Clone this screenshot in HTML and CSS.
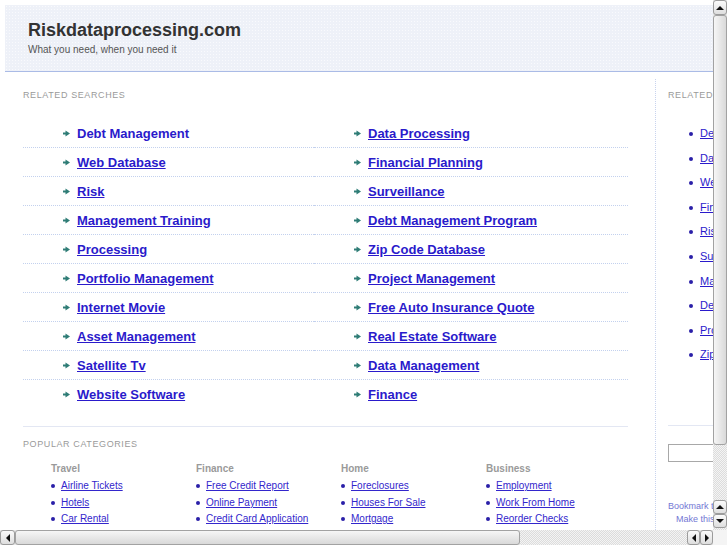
FILE: index.html
```html
<!DOCTYPE html>
<html lang="en">

<head>
    <meta charset="UTF-8">
    <meta name="viewport" content="width=device-width, initial-scale=1.0">
    <title>Riskdataprocessing.com</title>
    <link rel="stylesheet" href="styles.css">
</head>

<body>

    <div class="page">

        <!-- Header -->
        <div class="header">
            <h1>Riskdataprocessing.com</h1>
            <p class="tagline">What you need, when you need it</p>
        </div>

        <div class="content">

            <!-- Main column -->
            <div class="main">
                <h2 class="section-title">Related Searches</h2>
                <ul class="searches">
                    <li><svg class="arrow" width="7" height="7" viewBox="0 0 7 7"><rect x="0" y="2.5" width="3" height="2" /><polygon points="2.5,0.5 7,3.5 2.5,6.5" /></svg><a href="#" class="hover">Debt Management</a></li>
                    <li><svg class="arrow" width="7" height="7" viewBox="0 0 7 7"><rect x="0" y="2.5" width="3" height="2" /><polygon points="2.5,0.5 7,3.5 2.5,6.5" /></svg><a href="#">Data Processing</a></li>
                    <li><svg class="arrow" width="7" height="7" viewBox="0 0 7 7"><rect x="0" y="2.5" width="3" height="2" /><polygon points="2.5,0.5 7,3.5 2.5,6.5" /></svg><a href="#">Web Database</a></li>
                    <li><svg class="arrow" width="7" height="7" viewBox="0 0 7 7"><rect x="0" y="2.5" width="3" height="2" /><polygon points="2.5,0.5 7,3.5 2.5,6.5" /></svg><a href="#">Financial Planning</a></li>
                    <li><svg class="arrow" width="7" height="7" viewBox="0 0 7 7"><rect x="0" y="2.5" width="3" height="2" /><polygon points="2.5,0.5 7,3.5 2.5,6.5" /></svg><a href="#">Risk</a></li>
                    <li><svg class="arrow" width="7" height="7" viewBox="0 0 7 7"><rect x="0" y="2.5" width="3" height="2" /><polygon points="2.5,0.5 7,3.5 2.5,6.5" /></svg><a href="#">Surveillance</a></li>
                    <li><svg class="arrow" width="7" height="7" viewBox="0 0 7 7"><rect x="0" y="2.5" width="3" height="2" /><polygon points="2.5,0.5 7,3.5 2.5,6.5" /></svg><a href="#">Management Training</a></li>
                    <li><svg class="arrow" width="7" height="7" viewBox="0 0 7 7"><rect x="0" y="2.5" width="3" height="2" /><polygon points="2.5,0.5 7,3.5 2.5,6.5" /></svg><a href="#">Debt Management Program</a></li>
                    <li><svg class="arrow" width="7" height="7" viewBox="0 0 7 7"><rect x="0" y="2.5" width="3" height="2" /><polygon points="2.5,0.5 7,3.5 2.5,6.5" /></svg><a href="#">Processing</a></li>
                    <li><svg class="arrow" width="7" height="7" viewBox="0 0 7 7"><rect x="0" y="2.5" width="3" height="2" /><polygon points="2.5,0.5 7,3.5 2.5,6.5" /></svg><a href="#">Zip Code Database</a></li>
                    <li><svg class="arrow" width="7" height="7" viewBox="0 0 7 7"><rect x="0" y="2.5" width="3" height="2" /><polygon points="2.5,0.5 7,3.5 2.5,6.5" /></svg><a href="#">Portfolio Management</a></li>
                    <li><svg class="arrow" width="7" height="7" viewBox="0 0 7 7"><rect x="0" y="2.5" width="3" height="2" /><polygon points="2.5,0.5 7,3.5 2.5,6.5" /></svg><a href="#">Project Management</a></li>
                    <li><svg class="arrow" width="7" height="7" viewBox="0 0 7 7"><rect x="0" y="2.5" width="3" height="2" /><polygon points="2.5,0.5 7,3.5 2.5,6.5" /></svg><a href="#">Internet Movie</a></li>
                    <li><svg class="arrow" width="7" height="7" viewBox="0 0 7 7"><rect x="0" y="2.5" width="3" height="2" /><polygon points="2.5,0.5 7,3.5 2.5,6.5" /></svg><a href="#">Free Auto Insurance Quote</a></li>
                    <li><svg class="arrow" width="7" height="7" viewBox="0 0 7 7"><rect x="0" y="2.5" width="3" height="2" /><polygon points="2.5,0.5 7,3.5 2.5,6.5" /></svg><a href="#">Asset Management</a></li>
                    <li><svg class="arrow" width="7" height="7" viewBox="0 0 7 7"><rect x="0" y="2.5" width="3" height="2" /><polygon points="2.5,0.5 7,3.5 2.5,6.5" /></svg><a href="#">Real Estate Software</a></li>
                    <li><svg class="arrow" width="7" height="7" viewBox="0 0 7 7"><rect x="0" y="2.5" width="3" height="2" /><polygon points="2.5,0.5 7,3.5 2.5,6.5" /></svg><a href="#">Satellite Tv</a></li>
                    <li><svg class="arrow" width="7" height="7" viewBox="0 0 7 7"><rect x="0" y="2.5" width="3" height="2" /><polygon points="2.5,0.5 7,3.5 2.5,6.5" /></svg><a href="#">Data Management</a></li>
                    <li><svg class="arrow" width="7" height="7" viewBox="0 0 7 7"><rect x="0" y="2.5" width="3" height="2" /><polygon points="2.5,0.5 7,3.5 2.5,6.5" /></svg><a href="#">Website Software</a></li>
                    <li><svg class="arrow" width="7" height="7" viewBox="0 0 7 7"><rect x="0" y="2.5" width="3" height="2" /><polygon points="2.5,0.5 7,3.5 2.5,6.5" /></svg><a href="#">Finance</a></li>
                </ul>

                <div class="popular">
                    <h2 class="section-title">Popular Categories</h2>
                    <div class="categories">
                        <div class="category">
                            <h3>Travel</h3>
                            <ul>
                                <li><a href="#">Airline Tickets</a></li>
                                <li><a href="#">Hotels</a></li>
                                <li><a href="#">Car Rental</a></li>
                            </ul>
                        </div>
                        <div class="category">
                            <h3>Finance</h3>
                            <ul>
                                <li><a href="#">Free Credit Report</a></li>
                                <li><a href="#">Online Payment</a></li>
                                <li><a href="#">Credit Card Application</a></li>
                            </ul>
                        </div>
                        <div class="category">
                            <h3>Home</h3>
                            <ul>
                                <li><a href="#">Foreclosures</a></li>
                                <li><a href="#">Houses For Sale</a></li>
                                <li><a href="#">Mortgage</a></li>
                            </ul>
                        </div>
                        <div class="category">
                            <h3>Business</h3>
                            <ul>
                                <li><a href="#">Employment</a></li>
                                <li><a href="#">Work From Home</a></li>
                                <li><a href="#">Reorder Checks</a></li>
                            </ul>
                        </div>
                    </div>
                </div>
            </div>

            <!-- Sidebar -->
            <div class="sidebar">
                <h2 class="section-title">Related Searches</h2>
                <ul class="side-links">
                    <li><a href="#">Debt Management</a></li>
                    <li><a href="#">Data Processing</a></li>
                    <li><a href="#">Web Database</a></li>
                    <li><a href="#">Financial Planning</a></li>
                    <li><a href="#">Risk</a></li>
                    <li><a href="#">Surveillance</a></li>
                    <li><a href="#">Management Training</a></li>
                    <li><a href="#">Debt Management Program</a></li>
                    <li><a href="#">Processing</a></li>
                    <li><a href="#">Zip Code Database</a></li>
                </ul>
                <div class="search-box">
                    <input type="text">
                </div>
                <div class="bookmark">
                    <a href="#">Bookmark this page</a>
                    <a href="#" class="homepage">Make this your homepage</a>
                </div>
            </div>

        </div>
    </div>

    <!-- Window scrollbars -->
    <div class="vscroll">
        <div class="sb-btn up"></div>
        <div class="sb-thumb"><span class="grip"></span></div>
        <div class="sb-track"></div>
        <div class="sb-btn up small"></div>
        <div class="sb-btn down small"></div>
        <div class="sb-track tail"></div>
    </div>
    <div class="hscroll">
        <div class="sb-btn left"></div>
        <div class="sb-thumb"><span class="grip"></span></div>
        <div class="sb-track"></div>
        <div class="sb-btn left small"></div>
        <div class="sb-btn right small"></div>
    </div>
    <div class="sb-corner"></div>

</body>

</html>
```

FILE: styles.css
```css
html,
body {
    margin: 0;
    padding: 0;
    overflow: hidden;
    background-color: #ffffff;
    font-family: "Liberation Sans", Arial, sans-serif;
}

.page {
    width: 900px;
    padding: 5px 0 0 5px;
}

/* Header */
.header {
    background-color: #eef1f8;
    background-image: radial-gradient(#f9fafd 30%, transparent 40%);
    background-size: 3px 3px;
    border-bottom: 1px solid #aabbe6;
    padding: 15px 0 16px 23px;
}

.header h1 {
    margin: 0;
    font-size: 18px;
    font-weight: bold;
    color: #333333;
}

.tagline {
    margin: 3px 0 0;
    font-size: 10px;
    color: #555555;
}

.content {
    display: flex;
    margin-left: -5px;
}

.section-title {
    margin: 0;
    font-size: 9px;
    font-weight: normal;
    text-transform: uppercase;
    letter-spacing: 0.6px;
    color: #9a9a9a;
}

/* Main column */
.main {
    width: 605px;
    padding: 18px 27px 0 23px;
}

.searches {
    list-style: none;
    margin: 19px 0 0;
    padding: 0;
    display: grid;
    grid-template-columns: 291px 314px;
}

.searches li {
    display: flex;
    align-items: center;
    height: 28px;
    padding-left: 40px;
    border-bottom: 1px dotted #c3d1ee;
}

.searches li:nth-last-child(-n+2) {
    border-bottom: none;
}

.arrow {
    fill: #2f7d76;
    margin-right: 7px;
    flex-shrink: 0;
}

.searches a {
    font-size: 13px;
    font-weight: bold;
    color: #2a1acb;
}

.searches a.hover {
    text-decoration: none;
}

.popular {
    margin-top: 18px;
    border-top: 1px solid #e3e7f3;
    padding-top: 12px;
}

.categories {
    display: grid;
    grid-template-columns: repeat(4, 145px);
    padding-left: 28px;
    margin-top: 12px;
}

.category h3 {
    margin: 0 0 1px;
    font-size: 10px;
    line-height: 16.4px;
    color: #9a9a9a;
}

.category ul {
    list-style: none;
    margin: 0;
    padding: 0;
}

.category li {
    font-size: 10px;
    line-height: 16.4px;
}

.category li::before,
.side-links li::before {
    content: "";
    display: inline-block;
    width: 4px;
    height: 4px;
    border-radius: 50%;
    background-color: #2a1fa8;
    margin-right: 6px;
    vertical-align: 1px;
}

.category a {
    color: #3326cc;
}

/* Sidebar */
.sidebar {
    margin-top: 7px;
    padding: 11px 0 0 12px;
    border-left: 1px dotted #c8d3ee;
    width: 220px;
    height: 470px;
}

.side-links {
    list-style: none;
    margin: 21px 0 0;
    padding: 0;
}

.side-links li {
    font-size: 11px;
    line-height: 24.6px;
    white-space: nowrap;
}

.side-links li::before {
    margin: 0 7px 0 21px;
}

.side-links a {
    color: #2a1acb;
}

.search-box {
    margin-top: 58px;
    border-top: 1px solid #e3e7f3;
    padding-top: 18px;
}

.search-box input {
    display: block;
    width: 150px;
    height: 16px;
    margin: 0;
    padding: 0;
    border: 1px solid #a8a8a8;
}

.bookmark {
    margin-top: 38px;
    font-size: 9px;
    line-height: 13px;
}

.bookmark a {
    display: block;
    color: #7377d4;
    text-decoration: none;
    white-space: nowrap;
}

.bookmark a.homepage {
    padding-left: 8px;
}

/* Window scrollbars */
.vscroll {
    position: fixed;
    top: 0;
    right: 0;
    width: 14px;
    height: 530px;
    display: flex;
    flex-direction: column;
    background-color: #e6e6e6;
}

.hscroll {
    position: fixed;
    left: 0;
    bottom: 0;
    width: 713px;
    height: 15px;
    display: flex;
    background-color: #e6e6e6;
}

.sb-corner {
    position: fixed;
    right: 0;
    bottom: 0;
    width: 14px;
    height: 15px;
    background-color: #f4f4f4;
}

.sb-track {
    flex: 1;
    background-color: #ececec;
    background-image: repeating-conic-gradient(#dcdcdc 0 25%, #f4f4f4 0 50%);
    background-size: 2px 2px;
}

.sb-btn {
    box-sizing: border-box;
    border: 1px solid #9c9c9c;
    border-radius: 3px;
    background: linear-gradient(#fbfbfb, #dedede);
    display: flex;
    align-items: center;
    justify-content: center;
    flex-shrink: 0;
}

.vscroll .sb-btn {
    height: 15px;
}

.vscroll .sb-btn.small {
    height: 14px;
}

.hscroll .sb-btn {
    width: 15px;
}

.hscroll .sb-btn.small {
    width: 13px;
}

.sb-btn::after {
    content: "";
    width: 0;
    height: 0;
    border: 4px solid transparent;
}

.sb-btn.up::after {
    border-bottom: 4px solid #111111;
    border-top-width: 0;
}

.sb-btn.down::after {
    border-top: 4px solid #111111;
    border-bottom-width: 0;
}

.sb-btn.left::after {
    border-right: 4px solid #111111;
    border-left-width: 0;
}

.sb-btn.right::after {
    border-left: 4px solid #111111;
    border-right-width: 0;
}

.sb-thumb {
    box-sizing: border-box;
    border: 1px solid #a2a2a2;
    border-radius: 3px;
    display: flex;
    align-items: center;
    justify-content: center;
    flex-shrink: 0;
}

.vscroll .sb-thumb {
    height: 430px;
    background: linear-gradient(to right, #f6f6f6, #d9d9d9);
}

.hscroll .sb-thumb {
    width: 505px;
    background: linear-gradient(#f6f6f6, #d9d9d9);
}

.sb-track.tail {
    flex: 0 0 2px;
}

.grip {
    width: 8px;
    height: 14px;
    background-image: radial-gradient(#b4b4b4 40%, transparent 45%);
    background-size: 2px 2px;
}

.hscroll .grip {
    width: 16px;
    height: 8px;
}
```
